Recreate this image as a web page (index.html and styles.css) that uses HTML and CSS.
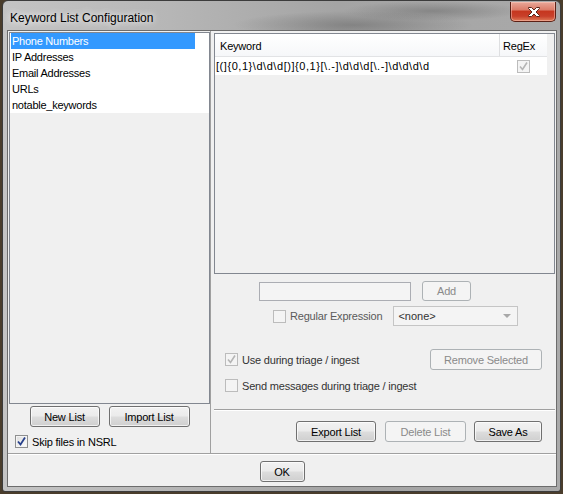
FILE: index.html
```html
<!DOCTYPE html>
<html>
<head>
<meta charset="utf-8">
<title>Keyword List Configuration</title>
<link rel="stylesheet" href="styles.css">
</head>
<body>
<div class="window">
  <div class="titlebar">
    <div class="title">Keyword List Configuration</div>
    <div class="close">
      <svg width="46" height="20" viewBox="0 0 46 20">
        <path d="M17.5 6.5 L20.5 6.5 L23 9 L25.5 6.5 L28.5 6.5 L28.5 7.5 L25 11 L28.5 14.5 L28.5 15.5 L25.5 15.5 L23 13 L20.5 15.5 L17.5 15.5 L17.5 14.5 L21 11 L17.5 7.5 Z" fill="#ffffff" stroke="#5a2418" stroke-width="1"/>
      </svg>
    </div>
  </div>
  <div class="client">
    <div class="main">
      <div class="left">
        <div class="listbox">
          <div class="item selected"><span class="hl">Phone Numbers</span></div>
          <div class="item"><span class="hl">IP Addresses</span></div>
          <div class="item"><span class="hl">Email Addresses</span></div>
          <div class="item"><span class="hl">URLs</span></div>
          <div class="item"><span class="hl">notable_keywords</span></div>
        </div>
        <div class="left-buttons">
          <button class="btn w-new">New List</button>
          <button class="btn w-import">Import List</button>
        </div>
        <div class="check-row skip">
          <span class="cb checked"><svg width="11" height="11" viewBox="0 0 11 11"><path d="M2 5.5 L4.5 8.5 L9 1.5" fill="none" stroke="#27408b" stroke-width="1.8"/></svg></span>
          <span class="lbl">Skip files in NSRL</span>
        </div>
      </div>
      <div class="right">
        <div class="table">
          <div class="thead">
            <div class="th kw">Keyword</div>
            <div class="th rx">RegEx</div>
          </div>
          <div class="trow">
            <div class="td kw">[(]{0,1}\d\d\d[)]{0,1}[\.-]\d\d\d[\.-]\d\d\d\d</div>
            <div class="td rx"><span class="cb disabled"><svg width="11" height="11" viewBox="0 0 11 11"><path d="M2 5.5 L4.5 8.5 L9 1.5" fill="none" stroke="#b5b5b5" stroke-width="1.6"/></svg></span></div>
          </div>
        </div>
        <div class="editor">
          <div class="row r1">
            <div class="textfield"></div>
            <button class="btn disabled w-add">Add</button>
          </div>
          <div class="row r2">
            <span class="cb disabled"></span>
            <span class="lbl dim">Regular Expression</span>
            <div class="combo">
              <span>&lt;none&gt;</span>
              <svg width="8" height="5" viewBox="0 0 8 5"><path d="M0 0 L8 0 L4 4 Z" fill="#a8a8a8"/></svg>
            </div>
          </div>
          <div class="row r3">
            <div class="check-row">
              <span class="cb disabled"><svg width="11" height="11" viewBox="0 0 11 11"><path d="M2 5.5 L4.5 8.5 L9 1.5" fill="none" stroke="#b5b5b5" stroke-width="1.6"/></svg></span>
              <span class="lbl soft">Use during triage / ingest</span>
            </div>
            <button class="btn disabled w-remove">Remove Selected</button>
          </div>
          <div class="row r4">
            <div class="check-row">
              <span class="cb disabled"></span>
              <span class="lbl soft">Send messages during triage / ingest</span>
            </div>
          </div>
        </div>
        <div class="footer">
          <button class="btn w-export">Export List</button>
          <button class="btn disabled w-delete">Delete List</button>
          <button class="btn w-save">Save As</button>
        </div>
      </div>
    </div>
    <div class="bottom">
      <button class="btn w-ok">OK</button>
    </div>
  </div>
</div>
</body>
</html>
```

FILE: styles.css
```css
* { box-sizing: border-box; }

html, body {
  margin: 0;
  padding: 0;
}

body {
  width: 563px;
  height: 494px;
  overflow: hidden;
  background: #4a3d2c;
  font-family: "Liberation Sans", Arial, sans-serif;
  font-size: 11px;
  color: #000;
}

.window {
  margin-left: 2px;
  width: 559px;
  height: 492px;
  border: 1px solid #3c3c3c;
  border-radius: 6px 6px 3px 3px;
  padding: 0 3px 4px 4px;
  display: flex;
  flex-direction: column;
  background:
    radial-gradient(ellipse 120px 14px at 350px 24px, rgba(70,70,70,.35), rgba(70,70,70,0)),
    radial-gradient(ellipse 90px 10px at 430px 10px, rgba(60,60,60,.3), rgba(60,60,60,0)),
    linear-gradient(90deg, #c4c4c4 0%, #b6b6b6 30%, #a4a4a4 60%, #a9a9a9 100%);
}

.titlebar {
  height: 29px;
  flex: none;
  display: flex;
  justify-content: space-between;
  align-items: flex-start;
}

.title {
  padding: 10px 0 0 3px;
  font-size: 12px;
  line-height: 14px;
  color: #000;
  text-shadow: 0 0 6px rgba(255,255,255,.9), 0 0 10px rgba(255,255,255,.7);
}

.close {
  margin-top: 1px;
  margin-right: 1px;
  width: 46px;
  height: 20px;
  border: 1px solid #5c2015;
  border-top: none;
  border-radius: 0 0 5px 5px;
  background: linear-gradient(#e9a899 0%, #dc7d6a 40%, #c6371f 50%, #c8402a 75%, #df7b58 100%);
  box-shadow: inset 0 0 0 1px rgba(255,210,200,.45);
}

.close svg { display: block; margin-top: -1px; }

.client {
  flex: 1;
  display: flex;
  flex-direction: column;
  background: #f0f0f0;
  border: 1px solid #6c6c6c;
}

.main {
  height: 422px;
  display: flex;
  flex: none;
}

.left {
  width: 203px;
  padding: 1px 0 0 1px;
  border-right: 1px solid #a0a0a0;
  display: flex;
  flex-direction: column;
}

.listbox {
  height: 372px;
  border: 1px solid #828790;
  background: #f0f0f0;
  padding-top: 0;
}

.item {
  height: 16px;
  background: #fff;
  line-height: 16px;
}

.item .hl {
  display: block;
  width: 184px;
  margin-left: 1px;
  padding-left: 1px;
  letter-spacing: -0.25px;
}

.item.selected .hl {
  background: #3399ff;
  color: #fff;
}

.left-buttons {
  margin-top: 2px;
  display: flex;
  justify-content: center;
  gap: 9px;
}

.btn {
  height: 21px;
  padding: 0;
  font-family: "Liberation Sans", Arial, sans-serif;
  font-size: 11px;
  letter-spacing: -0.2px;
  color: #000;
  border: 1px solid #707070;
  border-radius: 3px;
  background: linear-gradient(#f2f2f2 0%, #ebebeb 48%, #dddddd 52%, #cfcfcf 100%);
  box-shadow: inset 0 0 0 1px rgba(255,255,255,.7);
}

.btn.disabled {
  color: #8a8a8a;
  border-color: #adb2b5;
  background: #f4f4f4;
  box-shadow: none;
}

.w-new { width: 70px; }
.w-import { width: 81px; }
.w-add { width: 49px; height: 20px; }
.w-remove { width: 112px; height: 21px; }
.w-export { width: 80px; }
.w-delete { width: 81px; }
.w-save { width: 68px; }
.w-ok { width: 45px; }

.check-row {
  display: flex;
  align-items: center;
}

.skip {
  margin-top: 8px;
  margin-left: 6px;
}

.cb {
  width: 13px;
  height: 13px;
  flex: none;
  border: 1px solid #8e8f8f;
  background: linear-gradient(135deg, #dcdcdc, #fefefe);
  box-shadow: inset 0 0 0 1px #f4f4f4;
  display: flex;
  align-items: center;
  justify-content: center;
}

.cb.disabled {
  border-color: #bcbcbc;
  background: #f4f4f4;
  box-shadow: none;
}

.cb svg { display: block; }

.lbl {
  margin-left: 4px;
  letter-spacing: -0.2px;
}

.lbl.soft { color: #333; }
.lbl.dim { color: #5a5a5a; }

.right {
  flex: 1;
  display: flex;
  flex-direction: column;
  padding: 2px 1px 0 3px;
}

.table {
  height: 241px;
  flex: none;
  border: 1px solid #828790;
  background: #f0f0f0;
  padding: 0 7px 0 0;
}

.thead {
  display: flex;
  height: 23px;
  background: linear-gradient(#ffffff, #f6f7f9);
  border-bottom: 1px solid #e2e3e5;
}

.th {
  line-height: 24px;
  padding-left: 5px;
  letter-spacing: -0.2px;
}

.th.kw { width: 285px; border-right: 1px solid #dedfe1; }
.th.rx { flex: 1; padding-left: 3px; }

.trow {
  display: flex;
  height: 18px;
  background: #fff;
}

.td { line-height: 18px; }
.td.kw { width: 285px; padding-left: 1px; letter-spacing: 0.55px; white-space: nowrap; }
.td.rx { flex: 1; display: flex; align-items: center; justify-content: center; }

.editor {
  height: 135px;
  flex: none;
}

.row { display: flex; align-items: center; }

.r1 {
  margin-top: 7px;
  margin-left: 45px;
  gap: 11px;
}

.textfield {
  width: 152px;
  height: 19px;
  border: 1px solid #abadb3;
  background: #f4f4f4;
}

.r2 {
  margin-top: 5px;
  margin-left: 59px;
  height: 20px;
}

.combo {
  margin-left: 11px;
  width: 125px;
  height: 20px;
  border: 1px solid #c5c5c5;
  background: #f4f4f4;
  display: flex;
  align-items: center;
  justify-content: space-between;
  padding: 0 6px 0 4px;
  color: #333;
}

.r3 {
  margin-top: 23px;
  margin-left: 11px;
  justify-content: space-between;
  padding-right: 13px;
}

.r4 {
  margin-top: 9px;
  margin-left: 11px;
}

.footer {
  flex: 1;
  border-top: 1px solid #a0a0a0;
  box-shadow: inset 0 1px 0 #fff;
  display: flex;
  justify-content: flex-end;
  align-items: flex-start;
  padding: 11px 13px 0 0;
  gap: 8px;
}

.footer .w-export { margin-right: 1px; }

.bottom {
  flex: 1;
  border-top: 1px solid #a0a0a0;
  box-shadow: inset 0 1px 0 #fff;
  display: flex;
  justify-content: center;
  align-items: flex-start;
  padding-top: 7px;
}
```
